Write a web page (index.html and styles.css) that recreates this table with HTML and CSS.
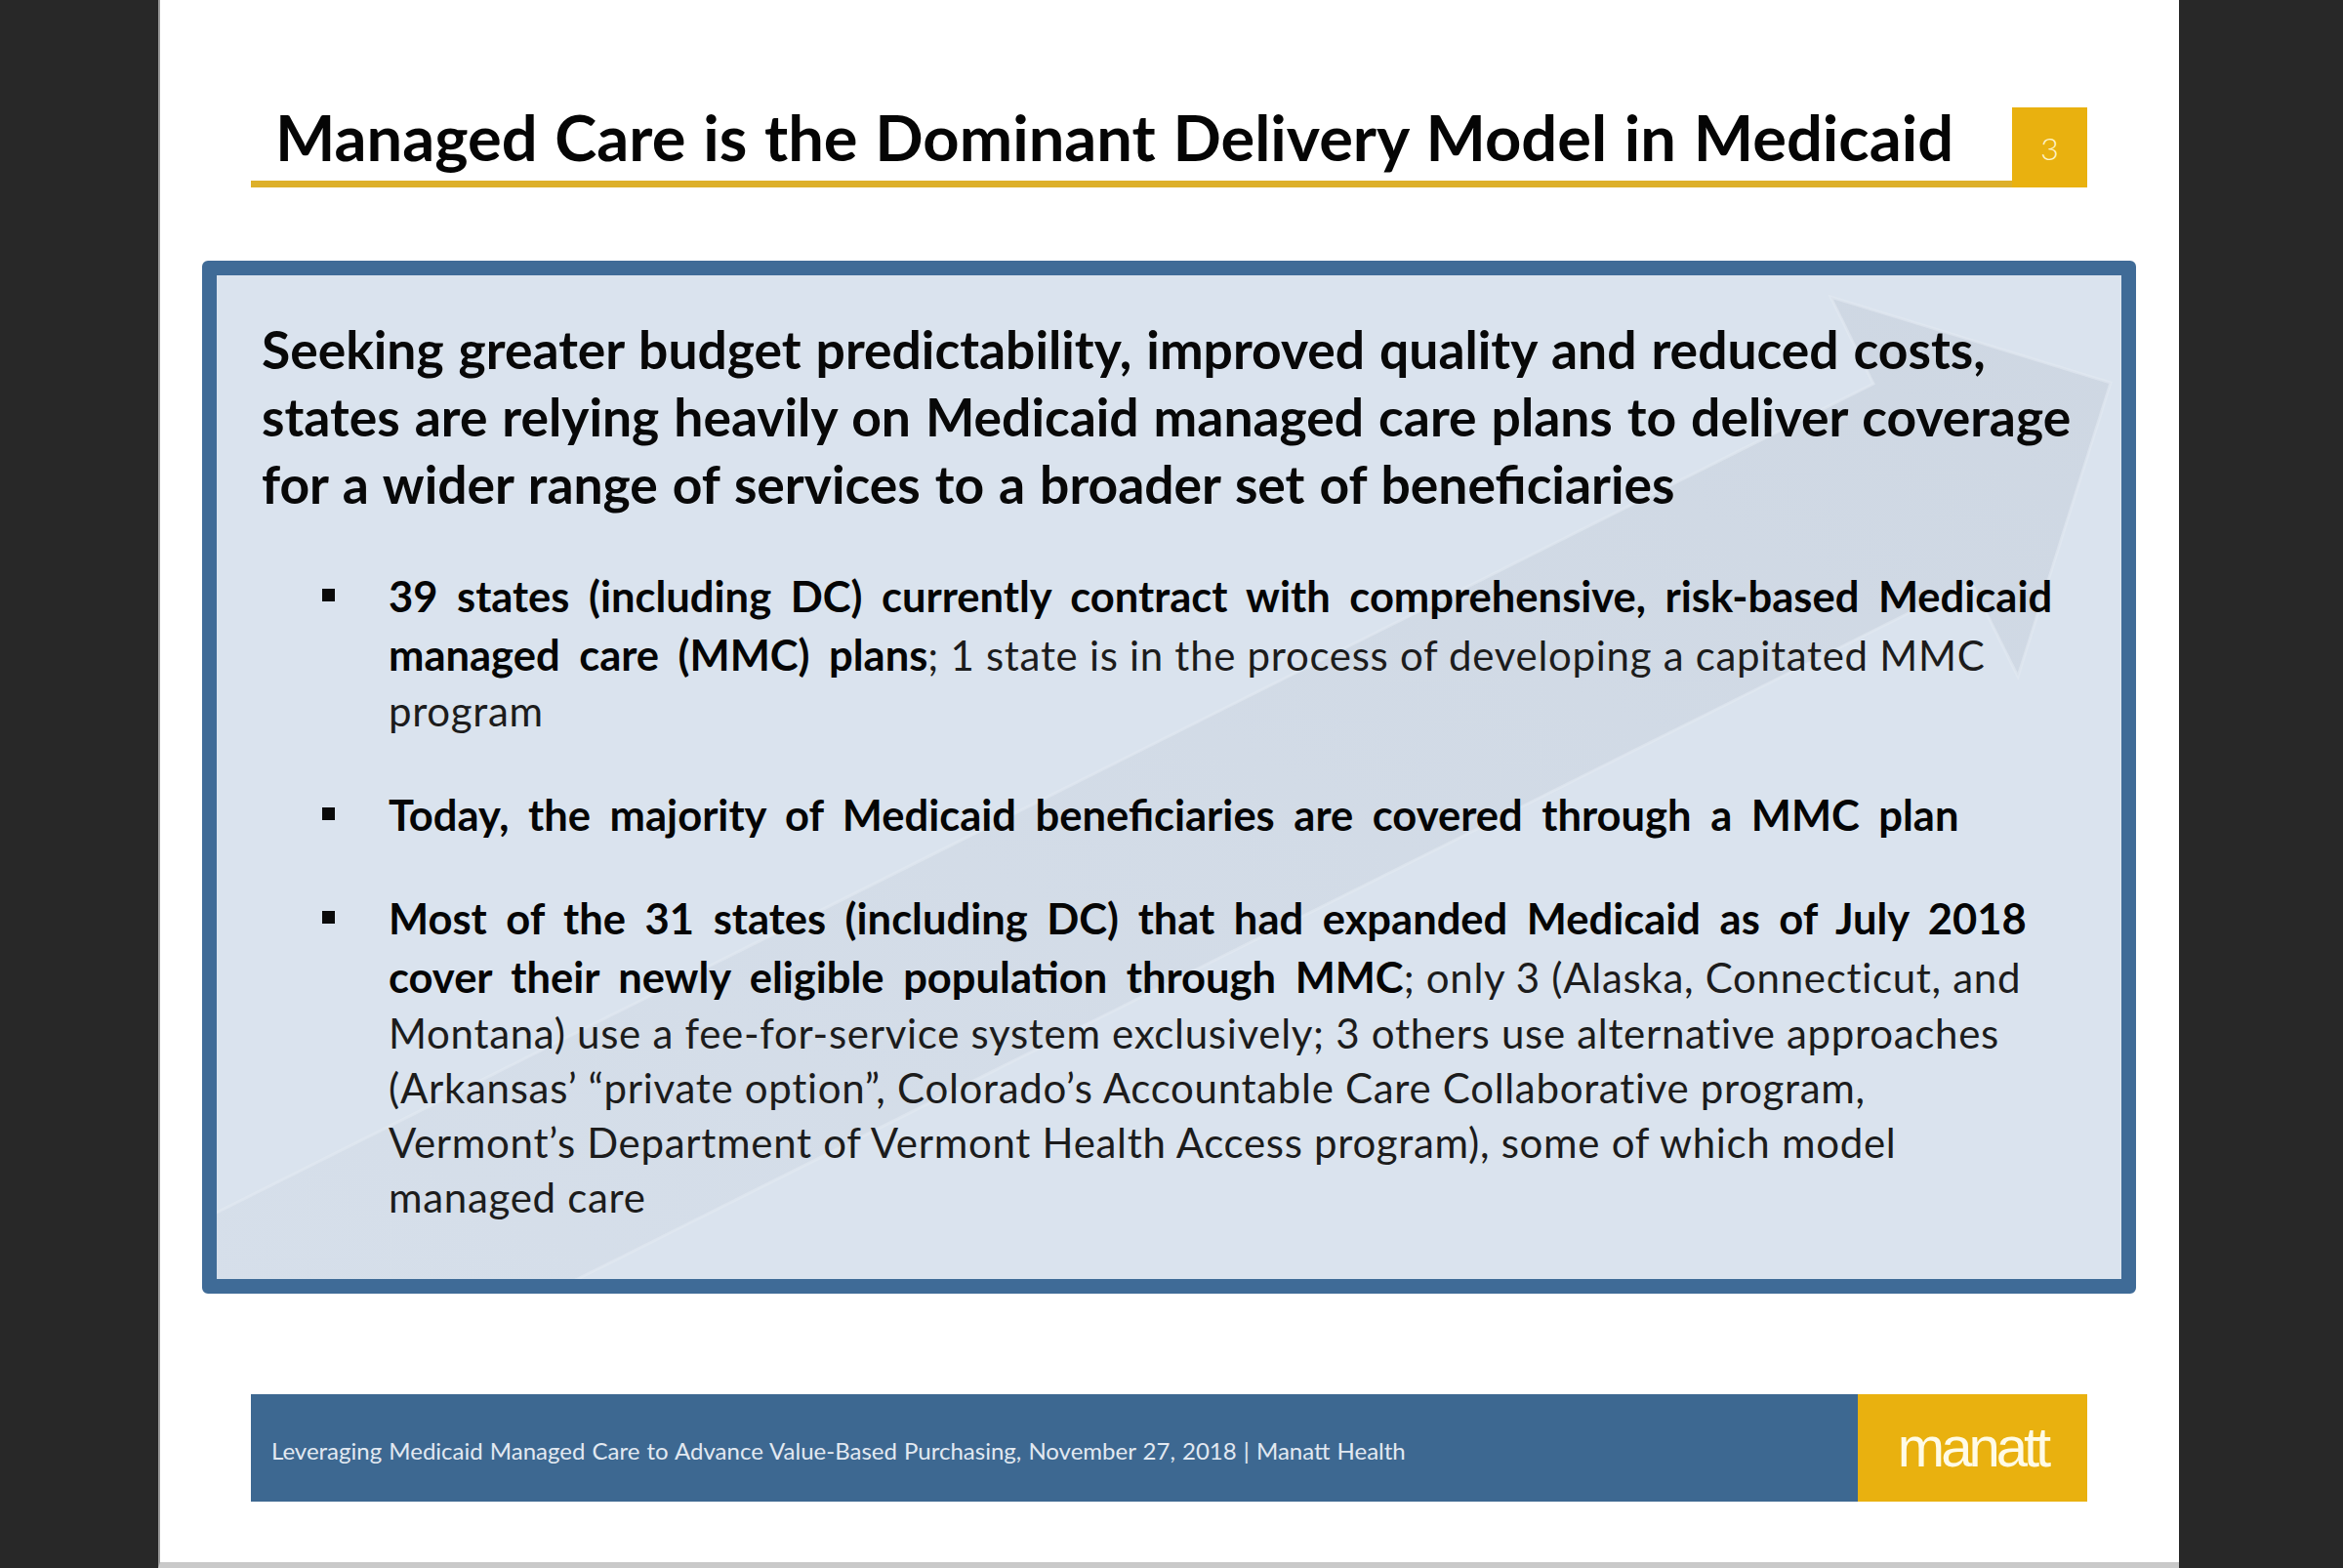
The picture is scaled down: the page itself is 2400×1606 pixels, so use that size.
FILE: index.html
```html
<!DOCTYPE html>
<html lang="en">
<head>
<meta charset="utf-8">
<title>Managed Care is the Dominant Delivery Model in Medicaid</title>
<link rel="stylesheet" href="styles.css">
</head>
<body>
<div class="slide">
  <div class="header">
    <h1 class="title">Managed Care is the Dominant Delivery Model in Medicaid</h1>
    <div class="pagenum">3</div>
  </div>

  <div class="panel">
    <svg class="arrow" viewBox="0 0 1951 1028" width="1951" height="1028" aria-hidden="true">
      <defs>
        <linearGradient id="ag" x1="0" y1="1" x2="1" y2="0">
          <stop offset="0" stop-color="#c9d2de" stop-opacity="0.15"/>
          <stop offset="0.5" stop-color="#c9d2de" stop-opacity="0.4"/>
          <stop offset="1" stop-color="#c6cfdb" stop-opacity="0.6"/>
        </linearGradient>
      </defs>
      <polygon points="-300,1110 1697,111 1653,22 1940,110 1845,411 1797,314 -300,1363" fill="url(#ag)" stroke="#e2e9f2" stroke-opacity="0.6" stroke-width="3"/>
    </svg>
    <div class="panel-body">
      <p class="lead">Seeking greater budget predictability, improved quality and reduced costs,<br>states are relying heavily on Medicaid managed care plans to deliver coverage<br>for a wider range of services to a broader set of beneficiaries</p>
      <ul class="points">
        <li><span class="txt"><b>39 states (including DC) currently contract with comprehensive, risk-based Medicaid<br>managed care (MMC) plans</b>; 1 state is in the process of developing a capitated MMC<br>program</span></li>
        <li><span class="txt"><b>Today, the majority of Medicaid beneficiaries are covered through a MMC plan</b></span></li>
        <li><span class="txt"><b>Most of the 31 states (including DC) that had expanded Medicaid as of July 2018<br>cover their newly eligible population through MMC</b>; only 3 (Alaska, Connecticut, and<br>Montana) use a fee-for-service system exclusively; 3 others use alternative approaches<br>(Arkansas’ “private option”, Colorado’s Accountable Care Collaborative program,<br>Vermont’s Department of Vermont Health Access program), some of which model<br>managed care</span></li>
      </ul>
    </div>
  </div>

  <div class="footer">
    <div class="footer-text">Leveraging Medicaid Managed Care to Advance Value-Based Purchasing, November 27, 2018 | Manatt Health</div>
    <div class="logo">manatt</div>
  </div>
</div>
</body>
</html>
```
FILE: styles.css
```css
html, body {
  margin: 0;
  padding: 0;
}
body {
  background: #282828;
  width: 2400px;
  height: 1606px;
  overflow: hidden;
  font-family: Lato, "Open Sans", sans-serif;
}
.slide {
  margin-left: 162px;
  width: 2068px;
  height: 1600px;
  background: #ffffff;
  border-left: 2px solid #9a9a9a;
  border-bottom: 6px solid #c9c9c9;
  overflow: hidden;
}

/* ---- header ---- */
.header {
  display: flex;
  margin: 110px 0 0 93px;
  width: 1881px;
  height: 82px;
}
.title {
  flex: 1;
  box-sizing: border-box;
  height: 82px;
  margin: 0;
  padding-left: 25px;
  border-bottom: 7px solid #ddb02a;
  font-family: Lato, sans-serif;
  font-weight: 700;
  font-size: 65px;
  line-height: 60px;
  word-spacing: 2px;
  color: #050505;
  white-space: nowrap;
}
.pagenum {
  width: 77px;
  height: 82px;
  background: #e9b10f;
  color: #fff4c8;
  font-family: Lato, sans-serif;
  font-weight: 300;
  font-size: 32px;
  display: flex;
  align-items: center;
  justify-content: center;
}

/* ---- panel ---- */
.panel {
  position: relative;
  box-sizing: border-box;
  margin: 75px 0 0 43px;
  width: 1981px;
  height: 1058px;
  border: 15px solid #3f6b97;
  border-radius: 6px;
  background: #dae3ee;
  overflow: hidden;
}
.arrow {
  position: absolute;
  left: 0;
  top: 0;
}
.panel-body {
  position: relative;
  padding: 41px 0 0 46px;
}
.lead {
  margin: 0;
  font-weight: 700;
  font-size: 53.4px;
  line-height: 69px;
  word-spacing: 2px;
  color: #080808;
  white-space: nowrap;
}
.points {
  list-style: none;
  margin: 50px 0 0;
  padding: 0 0 0 62px;
}
.points li {
  display: grid;
  grid-template-columns: 68px 1fr;
  font-size: 42px;
  line-height: 56px;
  letter-spacing: 0.7px;
  color: #1c1c1c;
  white-space: nowrap;
}
.points li + li {
  margin-top: 48px;
}
.points li:nth-child(3) {
  margin-top: 46px;
}
.points li::before {
  content: "";
  width: 13px;
  height: 13px;
  margin-top: 23px;
  background: #0a0a0a;
}
.points b {
  font-weight: 700;
  font-size: 43.5px;
  line-height: 60px;
  letter-spacing: 0;
  word-spacing: 9px;
  color: #050505;
}

/* ---- footer ---- */
.footer {
  display: flex;
  margin: 103px 0 0 93px;
  width: 1881px;
  height: 110px;
}
.footer-text {
  flex: 0 0 1646px;
  box-sizing: border-box;
  background: #3d6891;
  color: #e2e9f1;
  font-size: 24px;
  word-spacing: 1px;
  padding: 5px 0 0 21px;
  display: flex;
  align-items: center;
  white-space: nowrap;
}
.logo {
  flex: 1;
  background: #e9b10f;
  color: #fffbe6;
  font-family: "Liberation Sans", Arial, sans-serif;
  font-size: 58px;
  letter-spacing: -4px;
  display: flex;
  align-items: center;
  justify-content: center;
  padding-bottom: 4px;
}
```
